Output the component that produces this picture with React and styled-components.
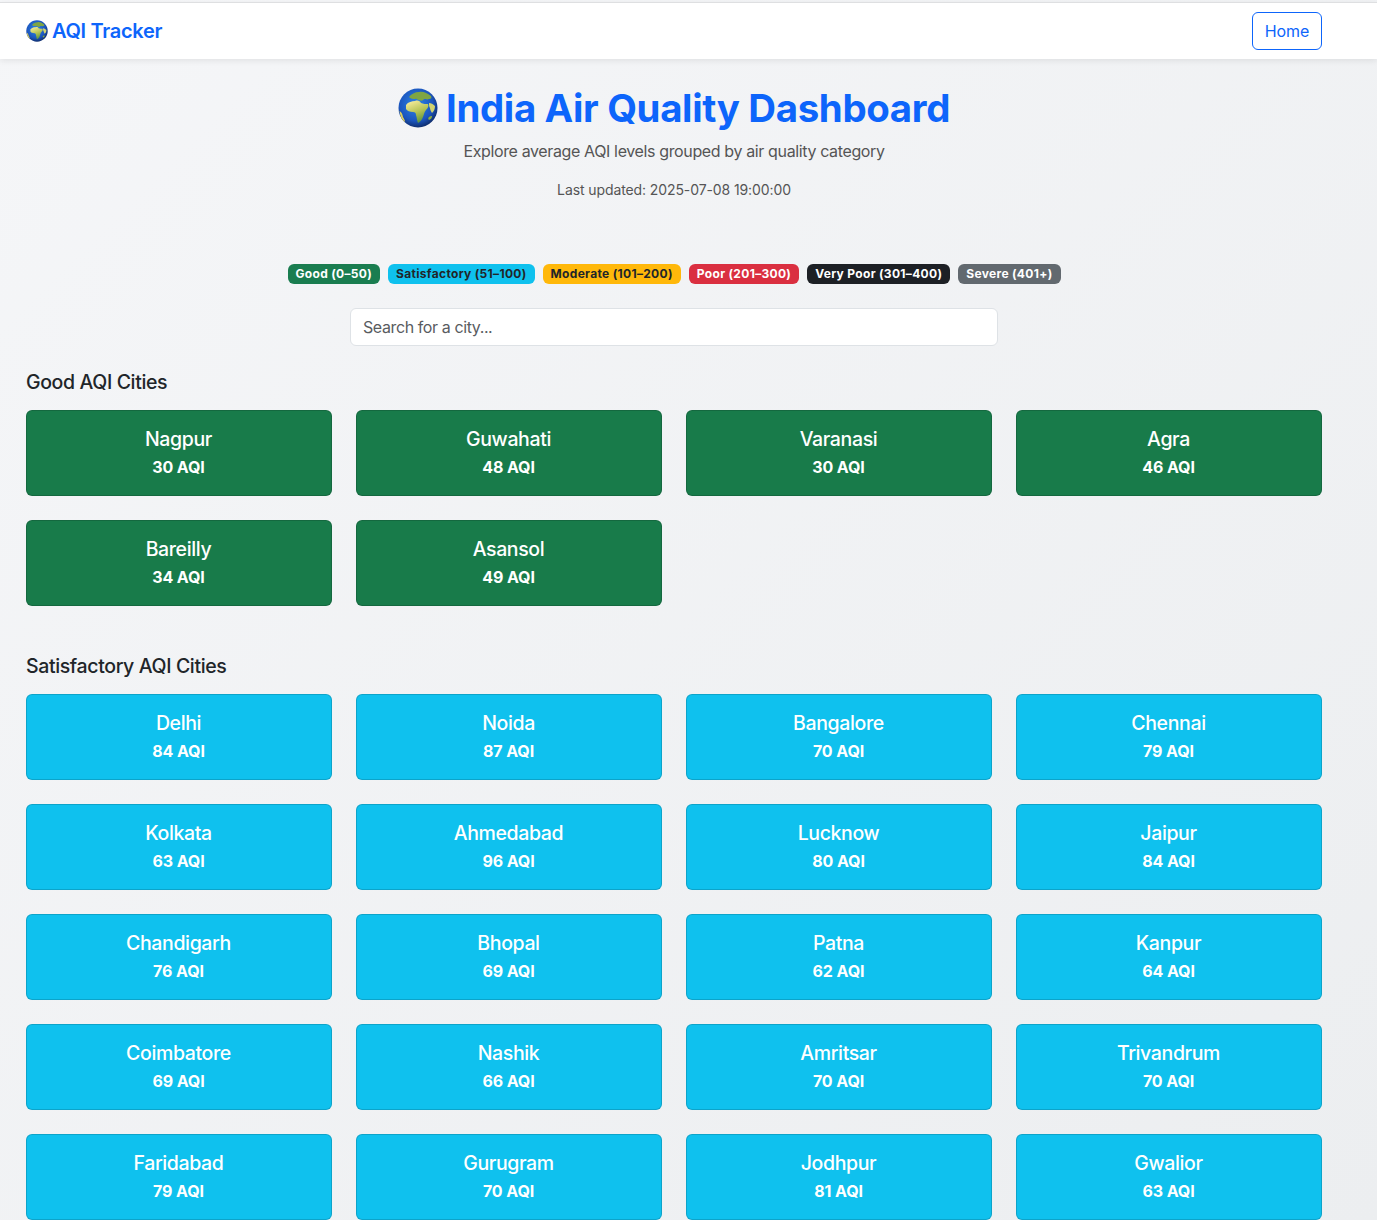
import React from 'react'
import styled, { createGlobalStyle } from 'styled-components'

const GlobalStyle = createGlobalStyle`
  html, body {
    margin: 0;
    padding: 0;
  }
  body {
    font-family: Inter, "Liberation Sans", sans-serif;
    color: #212529;
    background: #fff;
  }
  * {
    box-sizing: border-box;
  }
`

const Page = styled.div`
  height: 1220px;
  overflow: hidden;
  padding-top: 2px;
  background: linear-gradient(135deg, #f5f6f8 0%, #eceef0 100%);
`

const Navbar = styled.nav`
  display: flex;
  align-items: center;
  justify-content: space-between;
  height: 57px;
  padding: 0 55px 0 26px;
  background: #fff;
  border-top: 1px solid #dedfe1;
  box-shadow: 0 2px 6px rgba(0, 0, 0, 0.08);
`

const Brand = styled.a`
  display: flex;
  align-items: center;
  gap: 4px;
  font-size: 20px;
  font-weight: 600;
  letter-spacing: -0.3px;
  color: #0d65fb;
`

const HomeButton = styled.button`
  width: 70px;
  height: 38px;
  padding: 0;
  font: 400 16px Inter, "Liberation Sans", sans-serif;
  letter-spacing: -0.05px;
  color: #0d65fb;
  background: transparent;
  border: 1px solid #0d65fb;
  border-radius: 6px;
`

const Main = styled.main`
  padding: 0 55px 0 26px;
`

const Header = styled.header`
  display: flex;
  flex-direction: column;
  align-items: center;
  padding-top: 25px;
`

const Title = styled.h1`
  display: flex;
  align-items: center;
  gap: 8px;
  height: 48px;
  margin: 0 0 7px;
  font-size: 38.4px;
  font-weight: 700;
  letter-spacing: -0.34px;
  color: #0d65fb;
`

const Subtitle = styled.p`
  margin: 0 0 17px;
  line-height: 24px;
  font-size: 16px;
  letter-spacing: -0.37px;
  color: #555;
`

const Updated = styled.p`
  margin: 0 0 64px;
  line-height: 20px;
  font-size: 14px;
  letter-spacing: -0.1px;
  color: #555;
`

const Legend = styled.div`
  display: flex;
  justify-content: center;
  gap: 8px;
  margin-bottom: 24px;
`

const Badge = styled.span`
  height: 20px;
  padding: 0 8px;
  font-size: 12px;
  font-weight: 700;
  line-height: 20px;
  letter-spacing: 0.32px;
  white-space: nowrap;
  color: ${(p) => p.$text};
  background: ${(p) => p.$bg};
  border-radius: 6px;
`

const Search = styled.input`
  display: block;
  width: 648px;
  height: 38px;
  margin: 0 auto 24px;
  padding: 0 12px;
  font: 400 16px Inter, "Liberation Sans", sans-serif;
  letter-spacing: -0.4px;
  color: #212529;
  background: #fff;
  border: 1px solid #dee2e6;
  border-radius: 6px;

  &::placeholder {
    color: #595c5f;
    opacity: 1;
  }
`

const Section = styled.section`
  margin-bottom: 48px;
`

const SectionTitle = styled.h4`
  height: 24px;
  margin: 0 0 16px;
  font-size: 19.5px;
  font-weight: 500;
  line-height: 24px;
  letter-spacing: -0.37px;
`

const CardGrid = styled.div`
  display: grid;
  grid-template-columns: repeat(4, 306px);
  gap: 24px;
`

const Card = styled.div`
  display: flex;
  flex-direction: column;
  align-items: center;
  justify-content: center;
  height: 86px;
  padding-right: 1px;
  color: #fff;
  background: ${(p) => p.$bg};
  border: 1px solid rgba(0, 0, 0, 0.15);
  border-radius: 6px;
`

const CityName = styled.div`
  font-size: 19.5px;
  font-weight: 500;
  line-height: 24px;
  letter-spacing: -0.37px;
  margin-bottom: 4px;
`

const CityAqi = styled.div`
  font-size: 16px;
  font-weight: 700;
  line-height: 24px;
  letter-spacing: -0.1px;
`

const Globe = ({ size }) => (
  <svg width={size} height={size} viewBox="0 0 40 40">
    <defs>
      <radialGradient id="sea" cx="0.45" cy="0.4" r="0.62">
        <stop offset="0" stopColor="#2d86e8" />
        <stop offset="0.7" stopColor="#1b55bd" />
        <stop offset="1" stopColor="#0e2a66" />
      </radialGradient>
      <linearGradient id="land" x1="0.3" y1="0" x2="0.7" y2="1">
        <stop offset="0" stopColor="#f3ea98" />
        <stop offset="0.5" stopColor="#b4c254" />
        <stop offset="1" stopColor="#4f8f3c" />
      </linearGradient>
    </defs>
    <circle cx="20" cy="20" r="19.5" fill="url(#sea)" />
    <path
      fill="url(#land)"
      d="M8 17c2-3 6-4 9-4 3-1 5 0 6 2 2 1 5 1 7 1 1 2 0 4-2 6-2 2-2 5-3 7-1 3-3 5-5 6-1-2-1-5-2-8 0-2-1-3-3-3-3 0-6-1-7-3 0-2 0-3 0-4z"
    />
    <path
      fill="#7fa544"
      d="M11 9c2-3 6-5 10-5 4-1 8 1 12 4 1 2 0 3-2 3-2 1-3 0-5 0-1 2-3 2-5 1-2 0-2-2-4-1-2 0-4 0-6-2z"
    />
    <path fill="#d2d470" d="M31 15c2 0 4 1 6 3 0 3-1 5-3 7-1-2-2-3-2-5-1-1-1-3-1-5z" />
    <path fill="#dccd5e" d="M1.500 23c2 1 3 3 3.500 6 1 2 2 3 2 5-3-2-5-6-5.500-11z" />
    <path fill="#8fae3e" d="M31 29c1-1 2-1 3-1 0 2-1 3-3 4-1-1-1-2 0-3z" />
  </svg>
)

const levels = [
  { label: 'Good (0–50)', bg: '#1a7d50', text: '#fff' },
  { label: 'Satisfactory (51–100)', bg: '#0fc1ee', text: '#212529' },
  { label: 'Moderate (101–200)', bg: '#ffb80a', text: '#212529' },
  { label: 'Poor (201–300)', bg: '#da2f40', text: '#fff' },
  { label: 'Very Poor (301–400)', bg: '#1d2025', text: '#fff' },
  { label: 'Severe (401+)', bg: '#62696f', text: '#fff' }
]

const groups = [
  {
    title: 'Good AQI Cities',
    bg: '#187b4a',
    cities: [
      ['Nagpur', 30],
      ['Guwahati', 48],
      ['Varanasi', 30],
      ['Agra', 46],
      ['Bareilly', 34],
      ['Asansol', 49]
    ]
  },
  {
    title: 'Satisfactory AQI Cities',
    bg: '#0fc1ee',
    cities: [
      ['Delhi', 84],
      ['Noida', 87],
      ['Bangalore', 70],
      ['Chennai', 79],
      ['Kolkata', 63],
      ['Ahmedabad', 96],
      ['Lucknow', 80],
      ['Jaipur', 84],
      ['Chandigarh', 76],
      ['Bhopal', 69],
      ['Patna', 62],
      ['Kanpur', 64],
      ['Coimbatore', 69],
      ['Nashik', 66],
      ['Amritsar', 70],
      ['Trivandrum', 70],
      ['Faridabad', 79],
      ['Gurugram', 70],
      ['Jodhpur', 81],
      ['Gwalior', 63]
    ]
  }
]

const App = () => {
  return (
    <Page>
      <GlobalStyle />
      <Navbar>
        <Brand>
          <Globe size={22} />
          AQI Tracker
        </Brand>
        <HomeButton>Home</HomeButton>
      </Navbar>
      <Main>
        <Header>
          <Title>
            <Globe size={40} />
            India Air Quality Dashboard
          </Title>
          <Subtitle>Explore average AQI levels grouped by air quality category</Subtitle>
          <Updated>Last updated: 2025-07-08 19:00:00</Updated>
        </Header>
        <Legend>
          {levels.map((level) => (
            <Badge key={level.label} $bg={level.bg} $text={level.text}>
              {level.label}
            </Badge>
          ))}
        </Legend>
        <Search placeholder="Search for a city..." />
        {groups.map((group) => (
          <Section key={group.title}>
            <SectionTitle>{group.title}</SectionTitle>
            <CardGrid>
              {group.cities.map(([name, aqi]) => (
                <Card key={name} $bg={group.bg}>
                  <CityName>{name}</CityName>
                  <CityAqi>{aqi} AQI</CityAqi>
                </Card>
              ))}
            </CardGrid>
          </Section>
        ))}
      </Main>
    </Page>
  )
}

export default App
